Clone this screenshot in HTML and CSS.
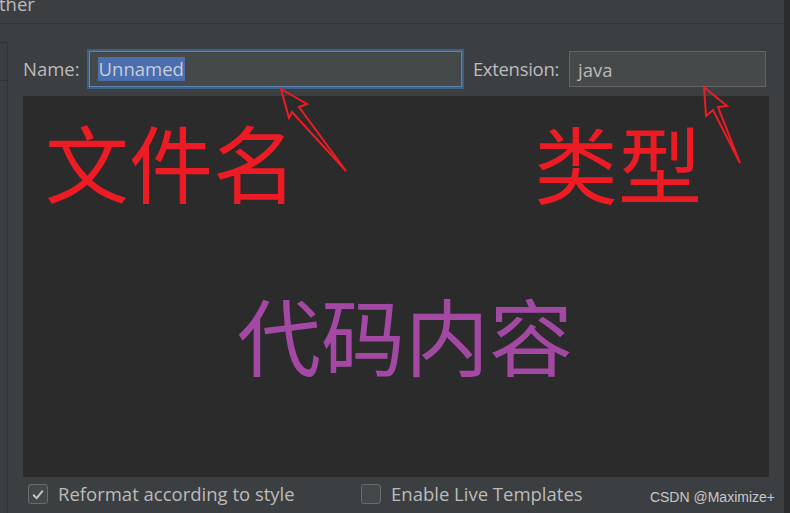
FILE: index.html
```html
<!DOCTYPE html>
<html lang="zh">
<head>
<meta charset="utf-8">
<title>New File</title>
<link rel="stylesheet" href="styles.css">
</head>
<body>
<div class="window">
  <div class="titlebar"><span class="title">ther</span></div>
  <div class="body">
    <div class="side"><div class="side-top"></div></div>
    <div class="main">
      <div class="row">
        <span class="lbl">Name:</span>
        <div class="field name"><span class="sel">Unnamed</span></div>
        <span class="lbl ext-lbl">Extension:</span>
        <div class="field ext">java</div>
      </div>
      <div class="code">
        <div class="note red n1">文件名</div>
        <div class="note red n2">类型</div>
        <div class="note purple n3">代码内容</div>
      </div>
      <div class="opts">
        <div class="opt first">
          <span class="box"><svg width="20" height="20" viewBox="0 0 20 20"><path d="M5.2 10.2 L8.6 13.6 L14.8 5.8" fill="none" stroke="#c4c4c4" stroke-width="2.2" stroke-linecap="round" stroke-linejoin="round"/></svg></span>
          <span class="opt-text">Reformat according to style</span>
        </div>
        <div class="opt">
          <span class="box"></span>
          <span class="opt-text">Enable Live Templates</span>
        </div>
      </div>
    </div>
    <div class="scroll"></div>
  </div>
  <div class="watermark">CSDN @Maximize+</div>
  <svg class="arrows" width="790" height="513" viewBox="0 0 790 513">
    <polygon points="281,89 307,104 299,107 346,171 292,112 289,118" fill="none" stroke="#ed1c24" stroke-width="2" stroke-linejoin="miter"/>
    <polygon points="704,87 727,106 718,107 740,163 713,110 706,116" fill="none" stroke="#ed1c24" stroke-width="2" stroke-linejoin="miter"/>
  </svg>
</div>
</body>
</html>
```

FILE: styles.css
```css
html, body {
  margin: 0;
  padding: 0;
  background: #3c3f41;
}
.window {
  position: relative;
  width: 790px;
  height: 513px;
  overflow: hidden;
  background: #3c3f41;
  font-family: "Open Sans", "Noto Sans", sans-serif;
  font-size: 18.5px;
  color: #bbbbbb;
  display: flex;
  flex-direction: column;
}
.titlebar {
  height: 23px;
  margin-right: 6px;
  border-bottom: 1px solid #323436;
  overflow: hidden;
  flex: none;
}
.title {
  display: block;
  line-height: 20px;
  margin-top: -6px;
  margin-left: -1px;
}
.body {
  flex: 1;
  display: flex;
  min-height: 0;
}
.side {
  width: 7px;
  margin-top: 18px;
  border-top: 1px solid #313335;
  border-right: 1px solid #313335;
  flex: none;
}
.side-top {
  height: 37px;
  border-bottom: 1px solid #313335;
}
.main {
  flex: 1;
  padding: 0 15px;
  display: flex;
  flex-direction: column;
  min-width: 0;
}
.scroll {
  width: 6px;
  flex: none;
  background: #2b2c2e;
  margin-top: -24px;
}
.row {
  margin-top: 27px;
  height: 36px;
  display: flex;
  align-items: center;
}
.lbl {
  white-space: nowrap;
  line-height: 24px;
}
.ext-lbl {
  letter-spacing: -0.3px;
}
.field {
  box-sizing: border-box;
  height: 36px;
  background: #45494a;
  border: 1px solid #646464;
  display: flex;
  align-items: center;
  padding-left: 8px;
  color: #bbbbbb;
}
.name {
  flex: 1;
  margin: 0 11px 0 9px;
  border-color: #5b86b3;
  box-shadow: 0 0 0 2px #3d6185;
  padding-left: 8px;
}
.sel {
  background: #4b6eaf;
  line-height: 24px;
  padding: 0 1px;
  color: #c8cdd6;
}
.ext {
  width: 197px;
  flex: none;
  margin-left: 10px;
  margin-right: 3px;
}
.code {
  position: relative;
  margin-top: 9px;
  height: 381px;
  background: #2b2b2b;
  flex: none;
}
.note {
  position: absolute;
  font-family: "Noto Sans CJK SC", sans-serif;
  font-size: 84px;
  line-height: 1;
  white-space: nowrap;
}
.red { color: #ed1c24; }
.purple { color: #a349a4; }
.n1 { left: 22px; top: 23px; }
.n2 { left: 511px; top: 24px; }
.n3 { left: 214px; top: 196px; }
.opts {
  display: flex;
  padding-top: 7px;
  padding-left: 5px;
}
.opt {
  display: flex;
  align-items: center;
  height: 20px;
}
.opt.first {
  width: 333px;
}
.box {
  box-sizing: border-box;
  width: 20px;
  height: 20px;
  border: 1px solid #6b6b6b;
  border-radius: 3px;
  background: #43494a;
  flex: none;
  display: flex;
}
.opt-text {
  margin-left: 10px;
  white-space: nowrap;
  line-height: 20px;
}
.watermark {
  position: absolute;
  right: 15px;
  bottom: 8px;
  font-family: "Liberation Sans", Arial, sans-serif;
  font-size: 14px;
  line-height: 16px;
  color: #c6c7c8;
}
.arrows {
  position: absolute;
  left: 0;
  top: 0;
  pointer-events: none;
}
```
